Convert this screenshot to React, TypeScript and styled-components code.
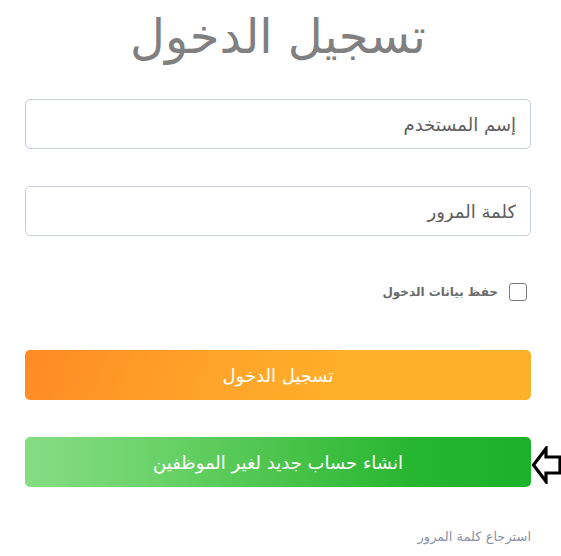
import React from 'react';
import styled, { createGlobalStyle } from 'styled-components';

const GlobalStyle = createGlobalStyle`
  html, body {
    margin: 0;
    padding: 0;
    background: #ffffff;
    font-family: "DejaVu Sans", "Noto Sans", sans-serif;
  }
`;

const Page = styled.div`
  width: 561px;
  height: 556px;
  overflow: hidden;
  padding: 0 30px 0 25px;
  box-sizing: border-box;
`;

const Form = styled.form`
  direction: rtl;
  width: 506px;
  display: flex;
  flex-direction: column;
`;

const Title = styled.h1`
  margin: 6px 0 0;
  height: 60px;
  line-height: 60px;
  text-align: center;
  font-size: 48px;
  font-weight: normal;
  color: #808080;
`;

const Field = styled.input<{ $top: number }>`
  box-sizing: border-box;
  width: 100%;
  height: 50px;
  margin-top: ${p => p.$top}px;
  padding: 0 14px;
  border: 1px solid #c6cbdc;
  border-radius: 5px;
  font: inherit;
  font-size: 18px;
  color: #333;
  direction: rtl;
  outline: none;

  &::placeholder {
    color: #5e5e5e;
  }
`;

const Remember = styled.label`
  display: flex;
  align-items: center;
  gap: 11px;
  margin-top: 47px;
  padding-right: 4px;
  font-size: 12px;
  font-weight: bold;
  color: #6b6b6b;
`;

const Box = styled.span`
  width: 16px;
  height: 16px;
  border: 1.5px solid #7a7a85;
  border-radius: 3px;
  background: #fff;
`;

const Button = styled.button<{ $bg: string; $top: number }>`
  width: 100%;
  height: 50px;
  margin-top: ${p => p.$top}px;
  border: none;
  border-radius: 5px;
  background: ${p => p.$bg};
  color: #ffffff;
  font: inherit;
  font-size: 18px;
  cursor: pointer;
`;

const ButtonRow = styled.div`
  position: relative;
  width: 100%;
`;

const Pointer = styled.svg`
  position: absolute;
  top: 46px;
  right: -31px;
`;

const Recover = styled.a`
  display: block;
  margin-top: 42px;
  font-size: 13px;
  color: #8b94a8;
  text-decoration: none;
`;

const orange = 'linear-gradient(110deg, #ff8a24 0%, #ffa229 35%, #ffae2a 60%, #ffb02a 100%)';
const green = 'linear-gradient(to right, #86dd84 0%, #6cd36a 25%, #4cc44d 50%, #25b52e 78%, #1cb22a 100%)';

export default function App() {
  return (
    <Page>
      <GlobalStyle />
      <Form onSubmit={e => e.preventDefault()}>
        <Title>تسجيل الدخول</Title>
        <Field $top={33} placeholder="إسم المستخدم" />
        <Field $top={37} type="password" placeholder="كلمة المرور" />
        <Remember>
          <Box />
          حفظ بيانات الدخول
        </Remember>
        <Button $top={49} $bg={orange}>
          تسجيل الدخول
        </Button>
        <ButtonRow>
          <Button $top={37} $bg={green}>
            انشاء حساب جديد لغير الموظفين
          </Button>
          <Pointer width="31" height="38" viewBox="0 0 31 38">
            <path d="M15 2.5 L2.5 19 L15 35.5 L15 27 L29 27 L29 11 L15 11 Z" fill="#fff" stroke="#000" strokeWidth="3.2" strokeLinejoin="miter" />
          </Pointer>
        </ButtonRow>
        <Recover href="#">استرجاع كلمة المرور</Recover>
      </Form>
    </Page>
  );
}
